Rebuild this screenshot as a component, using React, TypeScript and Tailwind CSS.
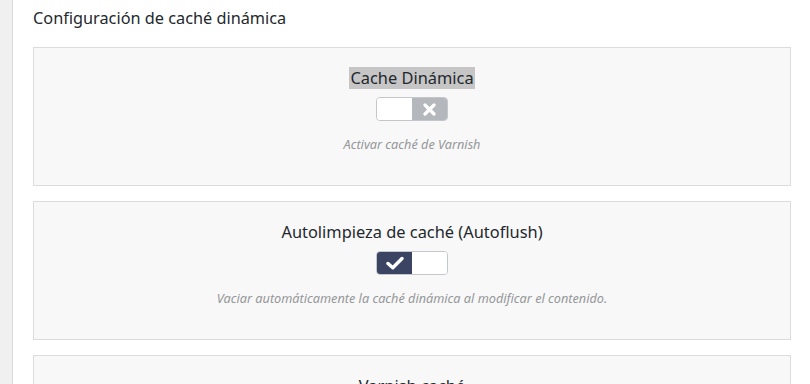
import React from "react";

function Toggle({ on }: { on: boolean }) {
  return (
    <div className="flex h-[24px] w-[72px] overflow-hidden rounded-[4px] border border-[#c3c6cb]">
      {on ? (
        <>
          <div className="flex w-1/2 items-center justify-center bg-[#3b4563]">
            <svg width="18" height="14" viewBox="0 0 18 14">
              <path d="M2 7.5 L6.8 11.8 L16 2.5" fill="none" stroke="#fff" strokeWidth="3.4" strokeLinecap="round" strokeLinejoin="round" />
            </svg>
          </div>
          <div className="w-1/2 bg-white" />
        </>
      ) : (
        <>
          <div className="w-1/2 bg-white" />
          <div className="flex w-1/2 items-center justify-center bg-[#b4b7bc]">
            <svg width="13" height="13" viewBox="0 0 13 13">
              <path d="M2 2 L11 11 M11 2 L2 11" fill="none" stroke="#fff" strokeWidth="3.2" strokeLinecap="round" />
            </svg>
          </div>
        </>
      )}
    </div>
  );
}

function Card({ title, highlight, on, desc }: { title: string; highlight?: boolean; on: boolean; desc: string }) {
  return (
    <div className="flex h-[139px] flex-col items-center border border-[#dcdcdc] bg-[#f8f8f8] pt-[19px]">
      <div className={"px-[1px] text-[16.4px] leading-[22px] text-[#23282d] " + (highlight ? "bg-[#c6c6c6]" : "")}>{title}</div>
      <div className="mt-[8px]">
        <Toggle on={on} />
      </div>
      <div className="mt-[15px] text-[12.7px] italic leading-[17px] text-[#959799]">{desc}</div>
    </div>
  );
}

export default function App() {
  return (
    <div className="flex h-[384px] w-[810px] overflow-hidden bg-white" style={{ fontFamily: '"Noto Sans", "Open Sans", sans-serif' }}>
      <div className="w-[13px] shrink-0 border-r border-[#dcdcdc] bg-[#f0f0f0]" />
      <div className="flex-1 pl-[20px] pr-[19px]">
        <h2 className="mt-[7px] text-[16.3px] leading-[22px] text-[#23282d]">Configuración de caché dinámica</h2>
        <div className="mt-[18px] flex flex-col gap-[15px]">
          <Card title="Cache Dinámica" highlight on={false} desc="Activar caché de Varnish" />
          <Card title="Autolimpieza de caché (Autoflush)" on desc="Vaciar automáticamente la caché dinámica al modificar el contenido." />
          <Card title="Varnish caché" on={false} desc="" />
        </div>
      </div>
    </div>
  );
}
